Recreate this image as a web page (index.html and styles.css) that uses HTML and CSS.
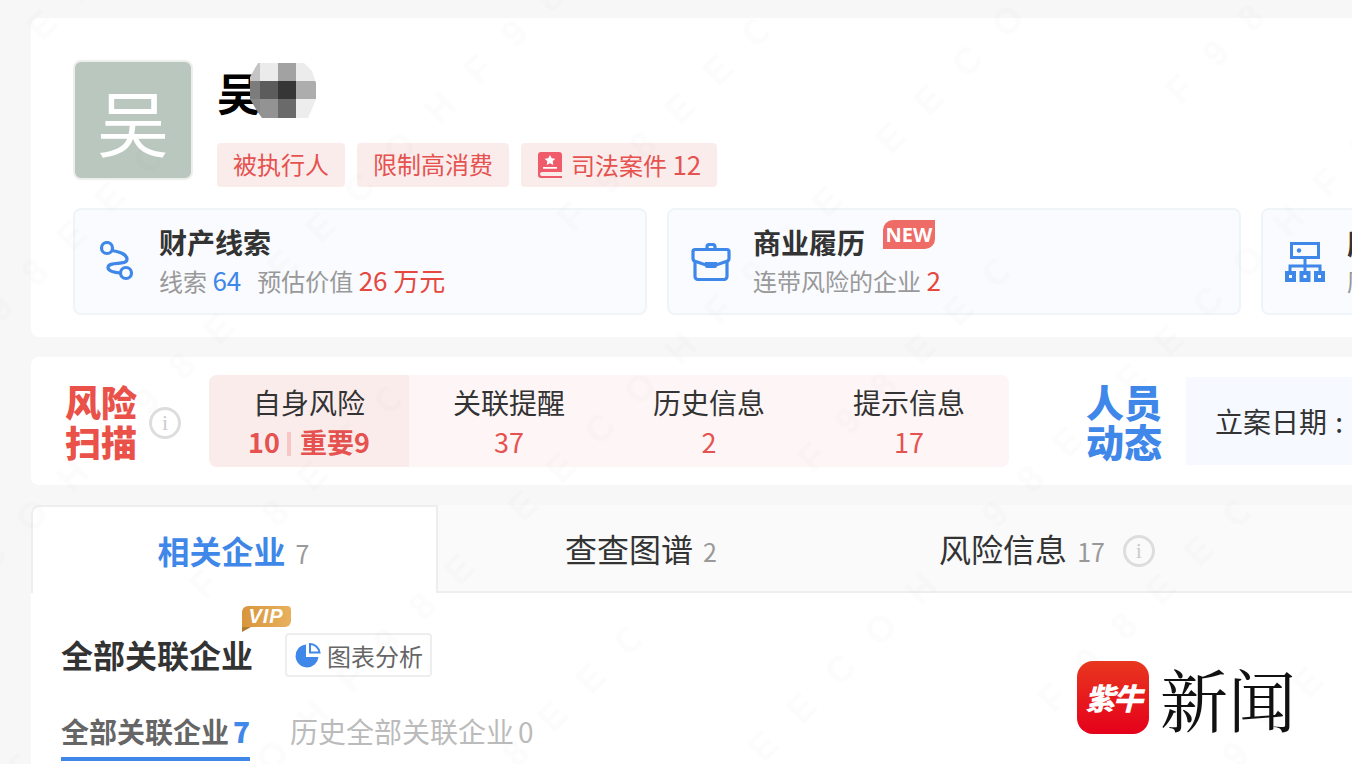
FILE: index.html
```html
<!DOCTYPE html>
<html lang="zh-CN">
<head>
  <meta charset="UTF-8" />
  <meta name="viewport" content="width=device-width, initial-scale=1.0" />
  <title>吴</title>
  <link rel="stylesheet" href="styles.css">
</head>
<body>
  <main class="page">

    <section class="card profile">
      <div class="person">
        <div class="avatar">吴</div>
        <div class="person-info">
          <div class="name">
            <span>吴</span>
            <svg class="mosaic" width="66" height="55" viewBox="0 0 66 55">
              <clipPath id="blur"><path d="M8 0H54L62 8L66 20V36L62 46L58 55H12L7 48L0 36V14z"/></clipPath>
              <g clip-path="url(#blur)">
                <rect x="0" y="0" width="10" height="18" fill="#c4c4c4"/>
                <rect x="10" y="0" width="18" height="18" fill="#ebebeb"/>
                <rect x="28" y="0" width="18" height="18" fill="#a2a2a2"/>
                <rect x="46" y="0" width="20" height="18" fill="#ececec"/>
                <rect x="0" y="18" width="10" height="18" fill="#7c7c7c"/>
                <rect x="10" y="18" width="18" height="18" fill="#5c5c5c"/>
                <rect x="28" y="18" width="18" height="18" fill="#363636"/>
                <rect x="46" y="18" width="20" height="18" fill="#adadad"/>
                <rect x="0" y="36" width="10" height="19" fill="#8a8a8a"/>
                <rect x="10" y="36" width="18" height="19" fill="#939393"/>
                <rect x="28" y="36" width="18" height="19" fill="#6a6a6a"/>
                <rect x="46" y="36" width="20" height="19" fill="#ededed"/>
              </g>
            </svg>
          </div>
          <div class="tags">
            <span class="tag">被执行人</span>
            <span class="tag">限制高消费</span>
            <span class="tag">
              <svg class="tag-icon" width="26" height="27" viewBox="0 0 26 27"><path fill="#ef5b6b" d="M4 0h18a3 3 0 0 1 3 3v17H5a2 2 0 0 0 0 4h20v2H4a3 3 0 0 1-3-3V3a3 3 0 0 1 3-3z"/><path fill="#fff" d="M13 3l1.700 3.300 3.600.5-2.600 2.500.6 3.600-3.300-1.700-3.300 1.700.6-3.600-2.600-2.500 3.600-.5zM6 15h14v1.800H6z"/></svg>
              <span>司法案件 <em>12</em></span>
            </span>
          </div>
        </div>
      </div>
      <div class="clues">
        <div class="clue">
          <svg class="clue-icon" width="40" height="42" viewBox="-3 0 40 42" fill="none" stroke="#3f87e8" stroke-width="3.200"><circle cx="7" cy="7" r="5.500"/><circle cx="26" cy="32" r="5.500"/><path d="M12 9.500C20 11 27 13 27 18.500c0 6.500-19 1-19 8 0 4 7 5 12.500 5.500"/></svg>
          <div class="clue-text">
            <div class="clue-title">财产线索</div>
            <div class="clue-sub">线索 <b class="blue">64</b><i></i>预估价值 <b class="red">26 万元</b></div>
          </div>
        </div>
        <div class="clue">
          <svg class="clue-icon" width="40" height="38" viewBox="0 0 40 38" fill="none" stroke="#3f87e8" stroke-width="3.200"><path d="M16 6V4a2.500 2.500 0 0 1 2.500-2.500h3A2.500 2.500 0 0 1 24 4v2"/><path d="M4 6.500h32a2 2 0 0 1 2 2v7a3 3 0 0 1-2 2.800L25 22H15L4 18.300a3 3 0 0 1-2-2.800v-7a2 2 0 0 1 2-2z"/><path d="M4 18v15.500a3 3 0 0 0 3 3h26a3 3 0 0 0 3-3V18"/><path fill="#3f87e8" stroke="none" d="M14 19h12v4a2 2 0 0 1-2 2h-8a2 2 0 0 1-2-2z"/></svg>
          <div class="clue-text">
            <div class="clue-title">商业履历 <span class="new-badge">NEW</span></div>
            <div class="clue-sub">连带风险的企业 <b class="red">2</b></div>
          </div>
        </div>
        <div class="clue">
          <svg class="clue-icon" width="40" height="40" viewBox="0 0 40 40" fill="none" stroke="#3f87e8" stroke-width="3"><rect x="6.500" y="1.500" width="27" height="14"/><path d="M20 16v13M5 30v-6h30v6"/><path fill="#3f87e8" stroke="none" d="M0 29h11v11H0zM14.500 29h11v11h-11zM29 29h11v11H29z"/><path fill="#fff" stroke="none" d="M4 33h3v3H4zM18.500 33h3v3h-3zM33 33h3v3h-3z"/><circle cx="14" cy="8.500" r="2.200" fill="#3f87e8" stroke="none"/></svg>
          <div class="clue-text">
            <div class="clue-title">历史信息</div>
            <div class="clue-sub">历史关联</div>
          </div>
        </div>
      </div>
    </section>

    <section class="card scan">
      <div class="scan-title red-title">风险<br>扫描</div>
      <span class="info-icon">i</span>
      <div class="scan-tabs">
        <div class="scan-tab active">
          <div class="scan-label">自身风险</div>
          <div class="scan-num bold">10<i></i>重要9</div>
        </div>
        <div class="scan-tab">
          <div class="scan-label">关联提醒</div>
          <div class="scan-num">37</div>
        </div>
        <div class="scan-tab">
          <div class="scan-label">历史信息</div>
          <div class="scan-num">2</div>
        </div>
        <div class="scan-tab">
          <div class="scan-label">提示信息</div>
          <div class="scan-num">17</div>
        </div>
      </div>
      <div class="scan-title blue-title">人员<br>动态</div>
      <div class="dynamic">立案日期 :</div>
    </section>

    <section class="panel">
      <div class="tabs">
        <div class="tab current">相关企业 <small>7</small></div>
        <div class="tab">查查图谱 <small>2</small></div>
        <div class="tab">风险信息 <small>17</small> <span class="info-icon">i</span></div>
      </div>
      <div class="panel-body">
        <div class="panel-head">
          <h2>全部关联企业</h2>
          <svg class="vip" width="50" height="27" viewBox="0 0 50 27">
            <linearGradient id="gold" x1="0" x2="1" y1="0" y2="0"><stop offset="0" stop-color="#d8963c"/><stop offset="1" stop-color="#e8b05e"/></linearGradient>
            <path fill="#b17a2c" d="M1 17v9l9-5z"/>
            <path fill="url(#gold)" d="M7 0h39a4 4 0 0 1 4 4v11a6 6 0 0 1-6 6H1V6a6 6 0 0 1 6-6z"/>
            <text x="25" y="17" text-anchor="middle" class="vip-text">VIP</text>
          </svg>
          <div class="chart-btn">
            <svg width="26" height="26" viewBox="0 0 26 26"><path fill="#3f87e8" d="M11 2.500v12.500h12.500A11.500 11.500 0 1 1 11 2.500z"/><path fill="none" stroke="#3f87e8" stroke-width="2" d="M15 2v8.500h9.500A9.500 9.500 0 0 0 15 2z"/></svg>
            图表分析
          </div>
        </div>
        <div class="sub-tabs">
          <div class="sub-tab current">全部关联企业<b>7</b></div>
          <div class="sub-tab">历史全部关联企业<span>0</span></div>
        </div>
      </div>
    </section>
  </main>

  <svg class="watermark" width="1352" height="764">
    <pattern id="mark" width="520" height="340" patternUnits="userSpaceOnUse" patternTransform="rotate(-45)">
      <text x="0" y="60" class="mark-text">E E C O H F 9 8 E</text>
      <text x="240" y="230" class="mark-text">F 9 8 E E C O H</text>
    </pattern>
    <rect width="1352" height="764" fill="url(#mark)"/>
  </svg>

  <div class="logo">
    <div class="logo-mark">紫牛</div>
    <div class="logo-text">新闻</div>
  </div>
</body>
</html>
```

FILE: styles.css
```css
* {
  margin: 0;
  padding: 0;
  box-sizing: border-box;
}

html, body {
  height: 764px;
  overflow: hidden;
}

body {
  font-family: "Noto Sans CJK SC", "Noto Sans", sans-serif;
  background: #f7f7f7;
  color: #333;
  position: relative;
}

.page {
  width: 1420px;
  margin-left: 31px;
  padding-top: 18px;
  display: flex;
  flex-direction: column;
}

.card {
  background: #fff;
  border-radius: 8px;
}

.profile {
  height: 319px;
  padding: 42px 0 0 42px;
}

.person {
  display: flex;
  gap: 24px;
}

.avatar {
  width: 120px;
  height: 120px;
  background: #b9c7bf;
  border: 2px solid #eee;
  border-radius: 8px;
  color: #fff;
  font-size: 72px;
  line-height: 116px;
  text-align: center;
}

.name {
  display: flex;
  height: 60px;
  font-size: 44px;
  font-weight: 700;
  line-height: 64px;
  color: #000;
}

.mosaic {
  margin: 3px 0 0 -11px;
}

.tags {
  display: flex;
  gap: 12px;
  margin-top: 23px;
}

.tag {
  display: flex;
  align-items: center;
  gap: 8px;
  height: 44px;
  padding: 0 16px 3px;
  background: #fbecec;
  border-radius: 4px;
  color: #e5524f;
  font-size: 24px;
}

.tag em {
  font-size: 26px;
  font-style: normal;
}

.tag-icon {
  margin-top: 3px;
}

.clues {
  display: flex;
  gap: 20px;
  margin-top: 21px;
}

.clue {
  display: flex;
  align-items: center;
  flex: none;
  width: 574px;
  height: 107px;
  padding-left: 22px;
  background: #f9fbff;
  border: 2px solid #eff4f8;
  border-radius: 8px;
}

.clue-icon {
  flex: none;
  margin-right: 22px;
}

.clue-title {
  font-size: 28px;
  font-weight: 700;
  line-height: 38px;
  position: relative;
}

.clue-sub {
  font-size: 24px;
  line-height: 38px;
  color: #999;
}

.clue-sub b {
  font-size: 26px;
  font-weight: 400;
}

.clue-sub i {
  display: inline-block;
  width: 16px;
}

.blue {
  color: #3f87e8;
}

.red {
  color: #e5483f;
}

.new-badge {
  position: absolute;
  left: 130px;
  top: -3px;
  width: 52px;
  height: 29px;
  background: #ee6b66;
  border-radius: 10px 0 10px 0;
  color: #fff;
  font-family: "Noto Sans", sans-serif;
  font-size: 20px;
  font-weight: 700;
  line-height: 29px;
  text-align: center;
}

.scan {
  display: flex;
  align-items: center;
  height: 128px;
  margin-top: 20px;
}

.scan-title {
  font-size: 36px;
  font-weight: 900;
  line-height: 40px;
  flex: none;
}

.red-title {
  margin-left: 34px;
  color: #ea5149;
}

.blue-title {
  width: 76px;
  margin-left: 77px;
  font-size: 38px;
  color: #3f87e8;
}

.info-icon {
  display: inline-block;
  flex: none;
  width: 32px;
  height: 32px;
  border: 3px solid #ddd;
  border-radius: 50%;
  color: #ccc;
  font-family: "Liberation Serif", serif;
  font-size: 22px;
  font-weight: 400;
  line-height: 26px;
  text-align: center;
}

.scan > .info-icon {
  margin: 3px 28px 0 12px;
}

.scan-tabs {
  display: flex;
  flex: none;
  height: 92px;
  background: #fef6f6;
  border-radius: 8px;
  overflow: hidden;
}

.scan-tab {
  width: 200px;
  text-align: center;
}

.scan-tab.active {
  background: #fbecec;
}

.scan-label {
  margin-top: 7px;
  font-size: 28px;
  line-height: 40px;
}

.scan-num {
  margin-top: 2px;
  font-size: 27px;
  line-height: 36px;
  color: #e5524f;
}

.scan-num.bold {
  font-weight: 700;
}

.scan-num i {
  display: inline-block;
  width: 4px;
  height: 24px;
  margin: 0 9px 0 7px;
  background: #f6c7c5;
  vertical-align: -3px;
}

.dynamic {
  width: 300px;
  height: 88px;
  margin-left: 24px;
  padding-left: 29px;
  background: #f6f9ff;
  font-size: 28px;
  line-height: 88px;
  word-spacing: 2px;
}

.panel {
  height: 260px;
  margin-top: 20px;
  background: #fff;
  border-radius: 8px 8px 0 0;
}

.tabs {
  display: flex;
  height: 88px;
  background: #fafafa;
  border-bottom: 2px solid #eee;
}

.tab {
  display: flex;
  align-items: baseline;
  justify-content: center;
  width: 406px;
  gap: 10px;
  font-size: 32px;
  line-height: 86px;
}

.tab small {
  font-size: 25px;
  font-weight: 400;
  color: #999;
}

.tab .info-icon {
  align-self: center;
  margin: 5px 0 0 8px;
}

.tab.current {
  width: 407px;
  height: 88px;
  padding-right: 2px;
  background: #fff;
  border: 2px solid #eee;
  border-bottom: 0;
  border-radius: 8px 0 0 0;
  color: #3f87e8;
  font-weight: 700;
}

.panel-body {
  padding: 0 30px;
}

.panel-head {
  display: flex;
  align-items: center;
  height: 87px;
  padding-top: 37px;
  position: relative;
}

.panel-head h2 {
  margin-top: -3px;
  font-size: 32px;
  line-height: 46px;
}

.vip {
  position: absolute;
  left: 180px;
  top: 13px;
}

.vip-text {
  fill: #fff;
  font-family: "Liberation Sans", sans-serif;
  font-size: 20px;
  font-style: italic;
  font-weight: 700;
  letter-spacing: 1px;
}

.chart-btn {
  display: flex;
  align-items: center;
  gap: 6px;
  height: 44px;
  margin-left: 32px;
  padding: 0 7px 0 8px;
  border: 2px solid #eee;
  border-radius: 4px;
  color: #666;
  font-size: 24px;
}

.sub-tabs {
  display: flex;
  gap: 40px;
  margin-top: 31px;
}

.sub-tab {
  display: flex;
  gap: 4px;
  height: 50px;
  font-size: 28px;
  line-height: 40px;
  color: #bbb;
}

.sub-tab.current {
  border-bottom: 4px solid #3f87e8;
  color: #666;
  font-weight: 700;
}

.sub-tab b {
  color: #3f87e8;
}

.watermark {
  position: absolute;
  left: 0;
  top: 0;
  pointer-events: none;
}

.mark-text {
  fill: #000;
  fill-opacity: 0.012;
  font-family: "Liberation Sans", sans-serif;
  font-size: 36px;
  font-weight: 700;
  letter-spacing: 10px;
}

.logo {
  position: absolute;
  left: 1077px;
  top: 661px;
  display: flex;
  align-items: center;
  gap: 11px;
}

.logo-mark {
  width: 72px;
  height: 73px;
  background: linear-gradient(#e8371f, #e5001a);
  border-radius: 16px;
  color: #fff;
  font-size: 30px;
  font-style: italic;
  font-weight: 900;
  line-height: 72px;
  text-align: center;
  letter-spacing: -2px;
}

.logo-text {
  color: #111;
  font-family: "Noto Serif CJK SC", "Noto Sans CJK SC", serif;
  font-size: 68px;
  line-height: 72px;
}
```
